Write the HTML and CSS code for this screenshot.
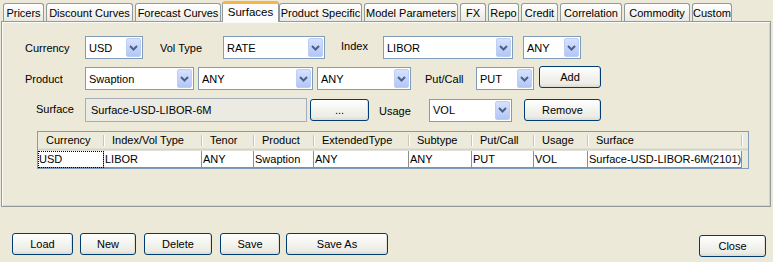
FILE: index.html
```html
<!DOCTYPE html>
<html>
<head>
<meta charset="utf-8">
<link rel="stylesheet" href="styles.css">
</head>
<body>
<div class="tabs">
  <div class="tab t-pricers">Pricers</div>
  <div class="tab t-discount">Discount Curves</div>
  <div class="tab t-forecast">Forecast Curves</div>
  <div class="tab t-surfaces sel">Surfaces</div>
  <div class="tab t-product">Product Specific</div>
  <div class="tab t-model">Model Parameters</div>
  <div class="tab t-fx">FX</div>
  <div class="tab t-repo">Repo</div>
  <div class="tab t-credit">Credit</div>
  <div class="tab t-corr">Correlation</div>
  <div class="tab t-comm">Commodity</div>
  <div class="tab t-custom">Custom</div>
</div>
<div class="panel">
  <div class="row row1">
    <span class="lbl l-cur">Currency</span>
    <div class="combo w58"><span class="val">USD</span><span class="arrow"><svg width="9" height="6" viewBox="0 0 9 6"><path d="M1 1 L4.5 4.5 L8 1" fill="none" stroke="#4d6185" stroke-width="2"/></svg></span></div>
    <span class="lbl l-vol">Vol Type</span>
    <div class="combo w102"><span class="val">RATE</span><span class="arrow"><svg width="9" height="6" viewBox="0 0 9 6"><path d="M1 1 L4.5 4.5 L8 1" fill="none" stroke="#4d6185" stroke-width="2"/></svg></span></div>
    <span class="lbl l-index">Index</span>
    <div class="combo w130"><span class="val">LIBOR</span><span class="arrow"><svg width="9" height="6" viewBox="0 0 9 6"><path d="M1 1 L4.5 4.5 L8 1" fill="none" stroke="#4d6185" stroke-width="2"/></svg></span></div>
    <div class="combo w58 ml10"><span class="val">ANY</span><span class="arrow"><svg width="9" height="6" viewBox="0 0 9 6"><path d="M1 1 L4.5 4.5 L8 1" fill="none" stroke="#4d6185" stroke-width="2"/></svg></span></div>
  </div>
  <div class="row row2">
    <span class="lbl l-cur">Product</span>
    <div class="combo w109"><span class="val">Swaption</span><span class="arrow"><svg width="9" height="6" viewBox="0 0 9 6"><path d="M1 1 L4.5 4.5 L8 1" fill="none" stroke="#4d6185" stroke-width="2"/></svg></span></div>
    <div class="combo w115 ml4"><span class="val">ANY</span><span class="arrow"><svg width="9" height="6" viewBox="0 0 9 6"><path d="M1 1 L4.5 4.5 L8 1" fill="none" stroke="#4d6185" stroke-width="2"/></svg></span></div>
    <div class="combo w94 ml4"><span class="val">ANY</span><span class="arrow"><svg width="9" height="6" viewBox="0 0 9 6"><path d="M1 1 L4.5 4.5 L8 1" fill="none" stroke="#4d6185" stroke-width="2"/></svg></span></div>
    <span class="lbl l-put">Put/Call</span>
    <div class="combo w58"><span class="val">PUT</span><span class="arrow"><svg width="9" height="6" viewBox="0 0 9 6"><path d="M1 1 L4.5 4.5 L8 1" fill="none" stroke="#4d6185" stroke-width="2"/></svg></span></div>
    <button class="btn b-add">Add</button>
  </div>
  <div class="row row3">
    <span class="lbl l-surf">Surface</span>
    <div class="field">Surface-USD-LIBOR-6M</div>
    <button class="btn b-dots">...</button>
    <span class="lbl l-usage">Usage</span>
    <div class="combo w83"><span class="val">VOL</span><span class="arrow"><svg width="9" height="6" viewBox="0 0 9 6"><path d="M1 1 L4.5 4.5 L8 1" fill="none" stroke="#4d6185" stroke-width="2"/></svg></span></div>
    <button class="btn b-remove">Remove</button>
  </div>
  <div class="table">
    <div class="thead">
      <div class="th">Currency</div>
      <div class="th">Index/Vol Type</div>
      <div class="th">Tenor</div>
      <div class="th">Product</div>
      <div class="th">ExtendedType</div>
      <div class="th">Subtype</div>
      <div class="th">Put/Call</div>
      <div class="th">Usage</div>
      <div class="th">Surface</div>
    </div>
    <div class="trow">
      <div class="td focus">USD</div>
      <div class="td">LIBOR</div>
      <div class="td">ANY</div>
      <div class="td">Swaption</div>
      <div class="td">ANY</div>
      <div class="td">ANY</div>
      <div class="td">PUT</div>
      <div class="td">VOL</div>
      <div class="td">Surface-USD-LIBOR-6M(2101)</div>
    </div>
  </div>
</div>
<div class="bottom">
  <button class="btn b-load">Load</button>
  <button class="btn b-new">New</button>
  <button class="btn b-delete">Delete</button>
  <button class="btn b-save">Save</button>
  <button class="btn b-saveas">Save As</button>
  <button class="btn b-close">Close</button>
</div>
</body>
</html>
```

FILE: styles.css
```css
html, body {
  margin: 0;
  padding: 0;
}
body {
  width: 773px;
  height: 262px;
  background: #ece9d8;
  font-family: "Liberation Sans", Arial, sans-serif;
  font-size: 11px;
  color: #000;
  overflow: hidden;
}

/* Tabs */
.tabs {
  display: flex;
  align-items: flex-end;
  height: 21px;
  padding-left: 3px;
}
.tab {
  box-sizing: border-box;
  height: 18px;
  margin-right: 2px;
  border: 1px solid #919b9c;
  border-bottom: none;
  border-radius: 3px 3px 0 0;
  background: linear-gradient(#ffffff, #f3f2ec 60%, #e9e8e1);
  display: flex;
  align-items: center;
  justify-content: center;
  padding-top: 1px;
  white-space: nowrap;
}
.t-pricers { width: 41px; }
.t-discount { width: 87px; }
.t-forecast { width: 86px; }
.t-product { width: 83px; }
.t-model { width: 94px; }
.t-fx { width: 26px; }
.t-repo { width: 31px; }
.t-credit { width: 37px; }
.t-corr { width: 62px; }
.t-comm { width: 66px; }
.t-custom { width: 40px; }
.tab.sel {
  width: 57px;
  height: 21px;
  margin: 0 0 -1px -1px;
  padding-top: 0;
  padding-bottom: 3px;
  background: #fcfcfe;
  border-top: 3px solid #f7b64a;
  border-color: #919b9c;
  border-top-color: #f5b547;
  position: relative;
  z-index: 1;
  font-size: 11.5px;
}

/* Panel */
.panel {
  box-sizing: border-box;
  margin-left: 1px;
  width: 770px;
  height: 186px;
  border: 1px solid #919b9c;
  box-shadow: inset 1px 1px 0 #fbfbf8, inset -1px -1px 0 #d8d5c4;
  background: #ece9d8;
  padding-top: 14px;
}
.row {
  display: flex;
  align-items: center;
  padding-left: 23px;
}
.row2 { margin-top: 8px; }
.row3 { margin-top: 8px; }

.lbl {
  white-space: nowrap;
}
.l-cur { width: 60px; }
.l-vol { width: 63px; margin-left: 17px; }
.l-index { width: 42px; margin-left: 16px; margin-top: -3px; }
.l-put { width: 51px; margin-left: 14px; }
.l-surf { width: 49px; padding-left: 11px; margin-top: -3px; }
.l-usage { width: 50px; margin-left: 10px; margin-top: 2px; }

.ml4 { margin-left: 4px; }
.ml10 { margin-left: 10px; }

/* Combos */
.combo {
  box-sizing: border-box;
  height: 23px;
  border: 1px solid #7f9db9;
  background: #fff;
  display: flex;
  align-items: stretch;
  padding: 1px;
}
.w58 { width: 58px; }
.w83 { width: 83px; }
.w94 { width: 94px; }
.w102 { width: 102px; }
.w109 { width: 109px; }
.w115 { width: 115px; }
.w130 { width: 130px; }
.combo .val {
  flex: 1;
  display: flex;
  align-items: center;
  padding-left: 2px;
  white-space: nowrap;
  overflow: hidden;
}
.combo .arrow {
  box-sizing: border-box;
  width: 15px;
  border: 1px solid #bccdf6;
  border-radius: 2px;
  background: linear-gradient(#d6e1fd, #c4d4fb 50%, #b2c6f5);
  display: flex;
  align-items: center;
  justify-content: center;
}

/* Text field */
.field {
  box-sizing: border-box;
  width: 222px;
  height: 24px;
  border: 1px solid #a5adb8;
  background: #ebeae3;
  display: flex;
  align-items: center;
  padding-left: 5px;
}

/* Buttons */
.btn {
  box-sizing: border-box;
  height: 22px;
  padding: 0;
  border: 1px solid #003c74;
  border-radius: 3px;
  background: linear-gradient(#ffffff, #f5f5f1 40%, #ecebe4 85%, #d9d6cb);
  font-family: "Liberation Sans", Arial, sans-serif;
  font-size: 11px;
  color: #000;
  box-shadow: inset -1px -1px 0 #e2ded3;
}
.b-add { width: 62px; margin-left: 5px; margin-top: -4px; }
.b-dots { width: 59px; margin-left: 3px; }
.b-remove { width: 77px; margin-left: 12px; }

/* Table */
.table {
  box-sizing: border-box;
  width: 712px;
  height: 38px;
  margin: 9px 0 0 35px;
  border: 1px solid #7f9db9;
  background: #ece9d8;
}
.thead, .trow {
  display: grid;
  grid-template-columns: 66px 98px 52px 60px 95px 63px 62px 54px 154px;
}
.thead {
  height: 19px;
  box-sizing: border-box;
  background: #ebeadb;
  border-bottom: 1px solid #e2e2da;
  box-shadow: inset 0 -1px 0 #d6d2c2, inset 0 -2px 0 #e2e0d3;
}
.th {
  position: relative;
  display: flex;
  align-items: center;
  justify-content: flex-start;
  padding-left: 8px;
  padding-bottom: 2px;
  white-space: nowrap;
}
.th::after {
  content: "";
  position: absolute;
  right: 0;
  top: 3px;
  bottom: 4px;
  width: 1px;
  background: #c7c5b2;
  box-shadow: 1px 0 0 #fff;
}
.trow {
  height: 17px;
}
.td {
  box-sizing: border-box;
  background: #fff;
  border-right: 1px solid #8e8e8e;
  border-bottom: 1px solid #8e8e8e;
  padding-left: 1px;
  display: flex;
  align-items: center;
  white-space: nowrap;
  overflow: hidden;
}
.td.focus {
  outline: 1px dotted #000;
  outline-offset: -1px;
}

/* Bottom buttons */
.bottom {
  display: flex;
  align-items: flex-start;
  margin-top: 26px;
  padding-left: 12px;
}
.b-load { width: 61px; }
.b-new { width: 56px; margin-left: 7px; }
.b-delete { width: 68px; margin-left: 8px; }
.b-save { width: 60px; margin-left: 8px; }
.b-saveas { width: 102px; margin-left: 6px; }
.b-close { width: 67px; margin-left: auto; margin-right: 7px; margin-top: 2px; }
```
